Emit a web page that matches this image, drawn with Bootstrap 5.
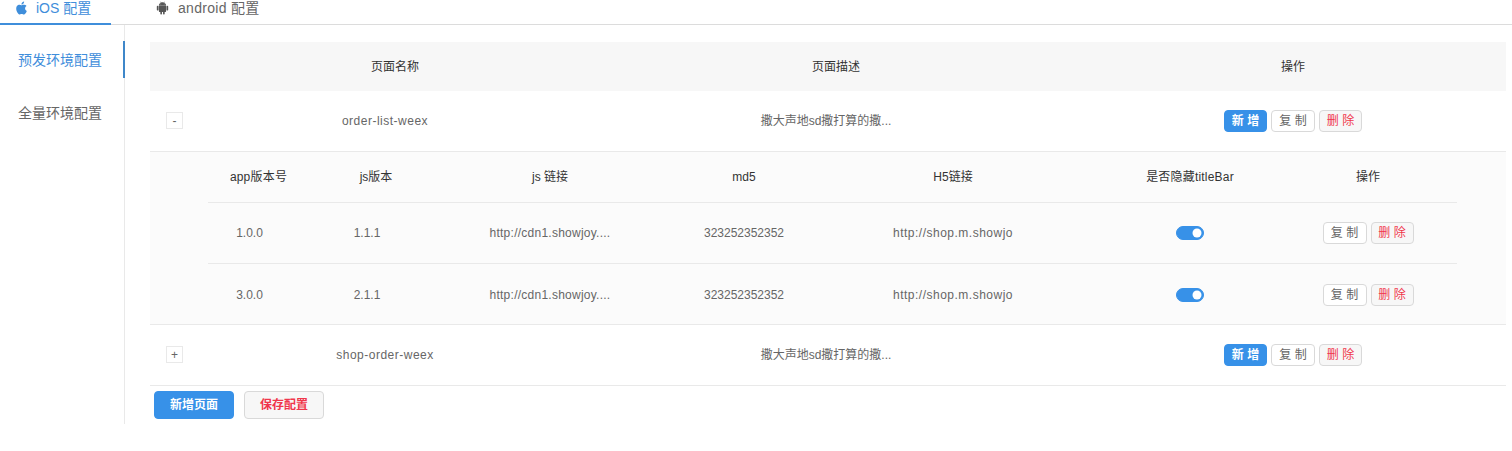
<!DOCTYPE html>
<html lang="zh">
<head>
<meta charset="utf-8">
<title>配置</title>
<link href="https://cdn.jsdelivr.net/npm/bootstrap@5.3.0/dist/css/bootstrap.min.css" rel="stylesheet">
<style>
body{font-family:"Liberation Sans","Noto Sans CJK SC",sans-serif;font-size:12px;color:#666;background:#fff;overflow:hidden}
.tabbar{height:25px;border-bottom:1px solid #dcdcdc}
.tabitem{height:25px;font-size:14px;line-height:16px;color:#666;display:flex;gap:8px;align-items:flex-start;padding-left:15px}
.tabitem svg{width:13px;height:14px;margin-top:1px;fill:currentColor}
.tab-ios{width:111px;color:#3f8edb;border-bottom:2px solid #3f8edb}
.tab-and{width:190px;padding-left:45px;color:#666;gap:9px;letter-spacing:.3px}
.tab-and svg{fill:#555}
.sidepane{width:125px;height:399px;border-right:1px solid #e9e9e9;padding-top:16px;flex:none}
.sideitem{height:37px;line-height:38px;font-size:14px;padding-left:18px;margin-right:-1px;color:#666;margin-bottom:16px}
.sideitem.on{color:#3f8edb;border-right:2px solid #3f87c9}
.mainpane{width:1356px;margin-left:25px;padding-top:17px}
.gridtable{table-layout:fixed;width:100%;margin:0;--bs-table-bg:transparent;--bs-table-color:#666;--bs-border-color:#e9e9e9}
.gridtable>*>tr>*{padding:0;vertical-align:middle;text-align:center;font-weight:400;border-bottom:1px solid #e9e9e9}
.outer>thead>tr>th{height:49px;background:#f7f7f7;color:#333;border-bottom:0}
.outer>tbody>tr>td{height:61px}
.outer>tbody>tr.firstrow>td{height:60px}
.outer>tbody>tr.subrow>td{background:#fbfbfb}
.inner{width:1249px;margin-left:58px}
.inner>thead>tr>th{height:51px;color:#333}
.inner>tbody>tr>td{height:61px}
.inner>tbody>tr:last-child>td{border-bottom:0;height:60px;padding-top:2px}
.c-e{width:48px}.c-n{width:394px}.c-d{width:488px}.c-o{width:426px}
.i1{width:127px}.i2{width:82px}.i3{width:266px}.i4{width:122px}.i5{width:296px}.i6{width:178px}.i7{width:178px}
.shift{padding-right:20px!important}
.wide{letter-spacing:.5px}
.cdnlink{letter-spacing:.25px}
.widehead{letter-spacing:.2px}
.inner .head1{padding-right:26px!important}
.inner .d1{padding-right:44px!important}
.inner .d2{padding-right:18px!important}
.expander{width:17px;height:17px;border:1px solid #e9e9e9;background:#fff;display:block;margin-left:16px;padding:0;line-height:14px;font-size:12px;color:#666}
.minibtn{height:22px;width:43px;padding:0;font-size:12px;line-height:20px;border-radius:4px}
.minibtn.whitebtn{width:44px}
.bluebtn{background:#3791e8;border:1px solid #3791e8;color:#fff;font-weight:700}
.whitebtn{background:#fff;border:1px solid #d9d9d9;color:#666}
.redbtn{background:#f7f7f7;border:1px solid #d9d9d9;color:#f0364b}
.bigbtn{height:28px;width:80px;padding:0;font-size:12px;font-weight:700;border-radius:4px;line-height:26px}
.form-switch.toggle{padding:0;margin:0;min-height:0;display:flex;justify-content:center}
.form-switch.toggle .form-check-input{width:28px;height:14px;margin:0;background-color:#3791e8;border-color:#3791e8;display:block}
.foot{margin-top:5px;padding-left:4px;gap:10px}
</style>
</head>
<body>
<div class="tabbar d-flex">
  <div class="tabitem tab-ios">
    <svg viewBox="0 0 16 16"><path d="M11.182.008C11.148-.03 9.923.023 8.857 1.18c-1.066 1.156-.902 2.482-.878 2.516.024.034 1.52.087 2.475-1.258.955-1.345.762-2.391.728-2.43Zm3.314 11.733c-.048-.096-2.325-1.234-2.113-3.422.212-2.189 1.675-2.789 1.698-2.854.023-.065-.597-.79-1.254-1.157a3.692 3.692 0 0 0-1.563-.434c-.108-.003-.483-.095-1.254.116-.508.139-1.653.589-1.968.607-.316.018-1.256-.522-2.267-.665-.647-.1-1.333.105-1.824.302-.49.197-1.422.757-2.074 2.24-.652 1.482-.311 3.83-.067 4.56.244.729.625 1.924 1.273 2.796.576.984 1.34 1.667 1.659 1.899.319.232 1.219.386 1.843.067.502-.308 1.408-.485 1.766-.472.357.013 1.061.154 1.782.539.571.197 1.111.115 1.652-.105.541-.221 1.324-1.059 2.238-2.758.347-.79.505-1.217.473-1.282Z"/></svg>
    <span>iOS 配置</span>
  </div>
  <div class="tabitem tab-and">
    <svg viewBox="0 0 16 16"><path d="m10.213 1.471.691-1.26c.046-.083.03-.147-.048-.192-.085-.038-.15-.019-.195.058l-.7 1.27A4.832 4.832 0 0 0 8.005.941c-.688 0-1.34.135-1.956.404l-.7-1.27C5.303 0 5.239-.018 5.154.02c-.078.046-.094.11-.049.193l.691 1.259a4.25 4.25 0 0 0-1.673 1.476A3.697 3.697 0 0 0 3.5 5.02h9c0-.75-.208-1.44-.623-2.072a4.266 4.266 0 0 0-1.664-1.476ZM6.22 3.303a.367.367 0 0 1-.267.11.35.35 0 0 1-.263-.11.366.366 0 0 1-.107-.264.37.37 0 0 1 .107-.265.351.351 0 0 1 .263-.11c.103 0 .193.037.267.11a.36.36 0 0 1 .112.265.36.36 0 0 1-.112.264Zm4.101 0a.351.351 0 0 1-.262.11.366.366 0 0 1-.268-.11.358.358 0 0 1-.112-.264c0-.103.037-.191.112-.265a.367.367 0 0 1 .268-.11c.104 0 .19.037.262.11a.367.367 0 0 1 .107.265c0 .102-.035.19-.107.264ZM3.5 11.77c0 .294.104.544.311.75.208.204.46.307.76.307h.758l.01 2.182c0 .276.097.51.292.703a.961.961 0 0 0 .7.288.973.973 0 0 0 .71-.288.95.95 0 0 0 .292-.703v-2.182h1.343v2.182c0 .276.097.51.292.703a.972.972 0 0 0 .71.288.973.973 0 0 0 .71-.288.95.95 0 0 0 .292-.703v-2.182h.76c.291 0 .54-.103.749-.308.207-.205.311-.455.311-.75V5.365h-9v6.404Zm10.495-6.587a.983.983 0 0 0-.702.278.91.91 0 0 0-.293.685v4.063c0 .271.098.501.293.69a.97.97 0 0 0 .702.284c.28 0 .517-.095.712-.284a.924.924 0 0 0 .293-.69V6.146a.91.91 0 0 0-.293-.685.995.995 0 0 0-.712-.278Zm-12.702.283a.985.985 0 0 1 .712-.283c.273 0 .507.094.702.283a.913.913 0 0 1 .293.68v4.063a.932.932 0 0 1-.288.69.97.97 0 0 1-.707.284.986.986 0 0 1-.712-.284.924.924 0 0 1-.293-.69V6.146c0-.264.098-.491.293-.68Z"/></svg>
    <span>android 配置</span>
  </div>
</div>
<div class="d-flex">
  <div class="sidepane">
    <div class="sideitem on">预发环境配置</div>
    <div class="sideitem">全量环境配置</div>
  </div>
  <div class="mainpane">
    <table class="table gridtable outer">
      <colgroup><col class="c-e"><col class="c-n"><col class="c-d"><col class="c-o"></colgroup>
      <thead><tr><th></th><th>页面名称</th><th>页面描述</th><th>操作</th></tr></thead>
      <tbody>
        <tr class="firstrow">
          <td><button class="expander">-</button></td>
          <td class="shift wide">order-list-weex</td>
          <td class="shift">撒大声地sd撒打算的撒...</td>
          <td><div class="d-flex justify-content-center gap-1"><button class="btn minibtn bluebtn">新 增</button><button class="btn minibtn whitebtn">复 制</button><button class="btn minibtn redbtn">删 除</button></div></td>
        </tr>
        <tr class="subrow">
          <td colspan="4">
            <table class="table gridtable inner">
              <colgroup><col class="i1"><col class="i2"><col class="i3"><col class="i4"><col class="i5"><col class="i6"><col class="i7"></colgroup>
              <thead><tr><th class="head1 widehead">app版本号</th><th>js版本</th><th>js 链接</th><th>md5</th><th>H5链接</th><th class="widehead">是否隐藏titleBar</th><th>操作</th></tr></thead>
              <tbody>
                <tr>
                  <td class="d1">1.0.0</td><td class="d2">1.1.1</td><td class="cdnlink">http://cdn1.showjoy....</td><td>323252352352</td><td class="wide">http://shop.m.showjo</td>
                  <td><div class="form-check form-switch toggle"><input class="form-check-input" type="checkbox" role="switch" checked aria-label="隐藏"></div></td>
                  <td><div class="d-flex justify-content-center gap-1"><button class="btn minibtn whitebtn">复 制</button><button class="btn minibtn redbtn">删 除</button></div></td>
                </tr>
                <tr>
                  <td class="d1">3.0.0</td><td class="d2">2.1.1</td><td class="cdnlink">http://cdn1.showjoy....</td><td>323252352352</td><td class="wide">http://shop.m.showjo</td>
                  <td><div class="form-check form-switch toggle"><input class="form-check-input" type="checkbox" role="switch" checked aria-label="隐藏"></div></td>
                  <td><div class="d-flex justify-content-center gap-1"><button class="btn minibtn whitebtn">复 制</button><button class="btn minibtn redbtn">删 除</button></div></td>
                </tr>
              </tbody>
            </table>
          </td>
        </tr>
        <tr>
          <td><button class="expander">+</button></td>
          <td class="shift wide">shop-order-weex</td>
          <td class="shift">撒大声地sd撒打算的撒...</td>
          <td><div class="d-flex justify-content-center gap-1"><button class="btn minibtn bluebtn">新 增</button><button class="btn minibtn whitebtn">复 制</button><button class="btn minibtn redbtn">删 除</button></div></td>
        </tr>
      </tbody>
    </table>
    <div class="foot d-flex">
      <button class="btn bigbtn bluebtn">新增页面</button>
      <button class="btn bigbtn redbtn">保存配置</button>
    </div>
  </div>
</div>
<script src="https://cdn.jsdelivr.net/npm/bootstrap@5.3.0/dist/js/bootstrap.bundle.min.js"></script>
</body>
</html>
